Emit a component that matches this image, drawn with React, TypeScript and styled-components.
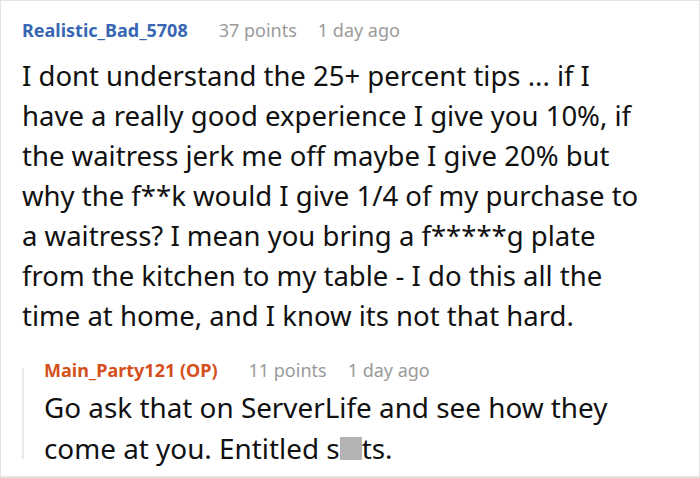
import React from "react";
import styled, { createGlobalStyle } from "styled-components";

const Global = createGlobalStyle`
  html, body { margin: 0; padding: 0; background: #ffffff; }
  body { font-family: "Noto Sans", "Open Sans", sans-serif; }
`;

const Frame = styled.div`
  box-sizing: border-box;
  width: 700px;
  height: 478px;
  border: 1px solid #e3e3e3;
  border-bottom-width: 2px;
  background: #fff;
  padding: 15px 47px 0 21px;
  overflow: hidden;
`;

const Comment = styled.div`
  display: flex;
  flex-direction: column;
`;

const Header = styled.div<{ $tight?: boolean }>`
  display: flex;
  align-items: baseline;
  height: 28px;
  font-size: 18px;
  line-height: 28px;
  margin-bottom: ${(p) => (p.$tight ? "3px" : "12px")};
  white-space: nowrap;
`;

const Author = styled.span<{ $op?: boolean }>`
  font-weight: 700;
  color: ${(p) => (p.$op ? "#d4501c" : "#3767b3")};
  margin-right: 31px;
`;

const Meta = styled.span`
  color: #9a9a9a;
  margin-right: 21px;
`;

const Body = styled.p`
  margin: 0;
  font-size: 27.5px;
  line-height: 40px;
  color: #111;
`;

const Reply = styled.div`
  margin-top: 20px;
  display: flex;
  gap: 20px;
`;

const Rail = styled.div`
  width: 2px;
  background: #e8e8e8;
  margin-top: 12px;
  flex: none;
  height: 91px;
`;

const ReplyBody = styled(Body)`
  font-size: 27.85px;
  line-height: 41px;
`;

const Censor = styled.span`
  display: inline-block;
  width: 22px;
  height: 23px;
  background: #b3b3b3;
  vertical-align: -1px;
`;

export default function App() {
  return (
    <>
      <Global />
      <Frame>
        <Comment>
          <Header>
            <Author>Realistic_Bad_5708</Author>
            <Meta>37 points</Meta>
            <Meta>1 day ago</Meta>
          </Header>
          <Body>
            I dont understand the 25+ percent tips ... if I have a really good
            experience I give you 10%, if the waitress jerk me off maybe I give
            20% but why the f**k would I give 1/4 of my purchase to a waitress? I
            mean you bring a f*****g plate from the kitchen to my table - I do
            this all the time at home, and I know its not that hard.
          </Body>
        </Comment>
        <Reply>
          <Rail />
          <Comment>
            <Header $tight>
              <Author $op>Main_Party121 (OP)</Author>
              <Meta>11 points</Meta>
              <Meta>1 day ago</Meta>
            </Header>
            <ReplyBody>
              Go ask that on ServerLife and see how they come at you. Entitled s
              <Censor />
              ts.
            </ReplyBody>
          </Comment>
        </Reply>
      </Frame>
    </>
  );
}
